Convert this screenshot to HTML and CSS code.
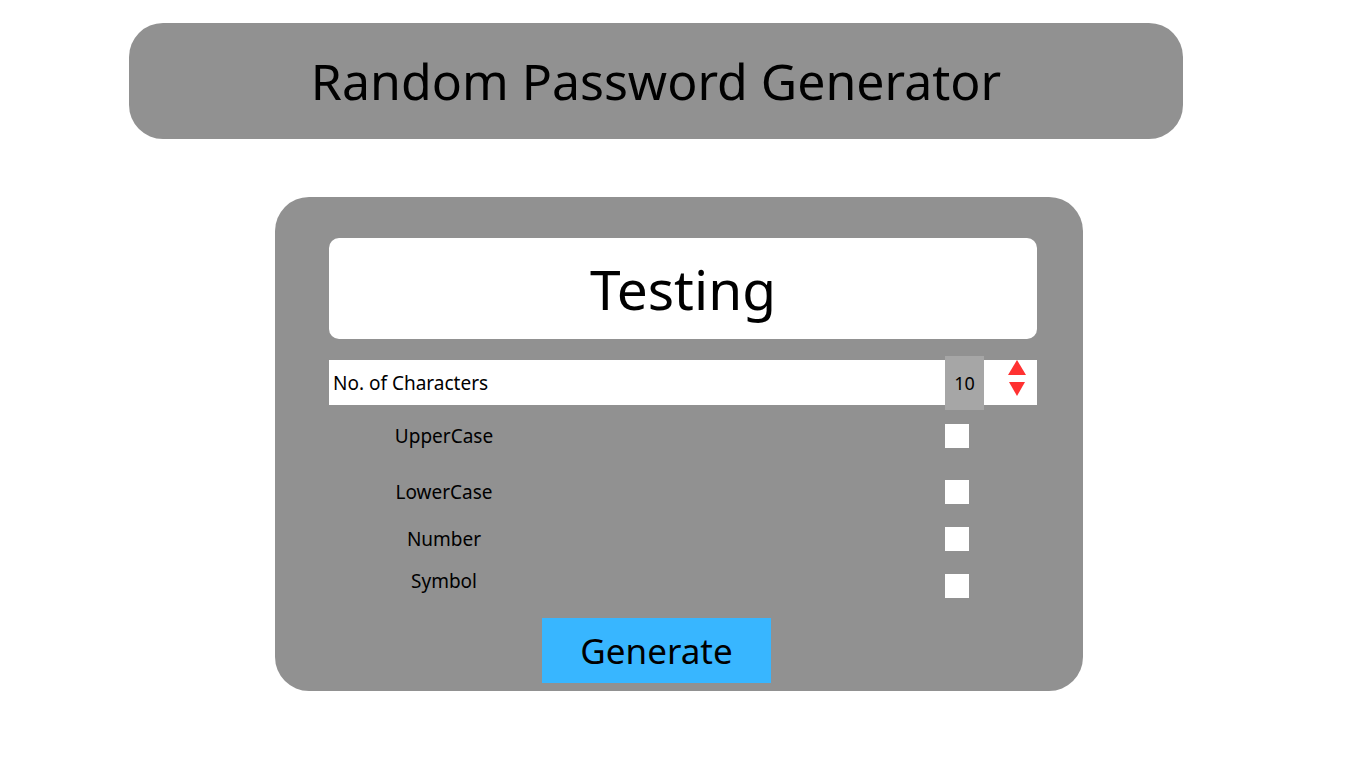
FILE: index.html
```html
<!DOCTYPE html>
<html lang="en">
<head>
<meta charset="utf-8">
<title>Random Password Generator</title>
<link rel="stylesheet" href="styles.css">
</head>
<body>
<header class="title-bar">
  <h1 class="title">Random Password Generator</h1>
</header>
<main class="card">
  <div class="display">Testing</div>
  <div class="length-row">
    <span class="length-label">No. of Characters</span>
    <span class="length-value">10</span>
    <span class="spinner">
      <svg width="20" height="38" viewBox="0 0 20 38">
        <polygon points="10,0 19,15 1,15" fill="#ff3131"/>
        <polygon points="2,22 18,22 10,36" fill="#ff3131"/>
      </svg>
    </span>
  </div>
  <div class="options">
    <div class="option option-first"><span class="option-label">UpperCase</span><span class="box"></span></div>
    <div class="option"><span class="option-label">LowerCase</span><span class="box"></span></div>
    <div class="option"><span class="option-label">Number</span><span class="box"></span></div>
    <div class="option option-last"><span class="option-label">Symbol</span><span class="box"></span></div>
  </div>
  <button class="generate">Generate</button>
</main>
</body>
</html>
```
FILE: styles.css
```css
* { box-sizing: border-box; }
body {
  margin: 0;
  background: #ffffff;
  font-family: "Noto Sans", "Open Sans", sans-serif;
  color: #000;
}
.title-bar {
  margin: 23px 0 0 129px;
  width: 1054px;
  height: 116px;
  background: #919191;
  border-radius: 34px;
  display: flex;
  align-items: center;
  justify-content: center;
}
.title {
  margin: 0;
  font-weight: 400;
  font-size: 50px;
  line-height: 1;
}
.card {
  margin: 58px 0 0 275px;
  width: 808px;
  height: 494px;
  background: #919191;
  border-radius: 34px;
  padding: 41px 46px 0 54px;
  display: flex;
  flex-direction: column;
}
.display {
  flex-shrink: 0;
  height: 101px;
  background: #fff;
  border-radius: 10px;
  display: flex;
  align-items: center;
  justify-content: center;
  font-size: 55px;
}
.length-row {
  flex-shrink: 0;
  margin-top: 21px;
  height: 45px;
  background: #fff;
  display: flex;
  align-items: center;
}
.length-label {
  flex: 1;
  padding-left: 4px;
  font-size: 19px;
}
.length-value {
  width: 39px;
  height: 54px;
  background: #a6a6a6;
  display: flex;
  align-items: center;
  justify-content: center;
  font-size: 18px;
}
.spinner {
  width: 53px;
  align-self: flex-start;
  padding: 0 0 0 23px;
}
.spinner svg { display: block; }
.options {
  flex-shrink: 0;
  margin-top: 19px;
  display: flex;
  flex-direction: column;
  gap: 23px;
}
.option {
  display: flex;
  align-items: center;
  height: 24px;
}
.option-first { margin-bottom: 9px; }
.option-label {
  width: 230px;
  text-align: center;
  font-size: 19px;
}
.option-last .option-label { position: relative; top: -5px; }
.box {
  margin-left: 386px;
  width: 24px;
  height: 24px;
  background: #fff;
}
.generate {
  flex-shrink: 0;
  margin: 20px 0 0 213px;
  width: 229px;
  height: 65px;
  border: none;
  background: #38b6ff;
  font-family: inherit;
  font-size: 35px;
  line-height: 1;
  color: #000;
  padding: 0;
}
```
